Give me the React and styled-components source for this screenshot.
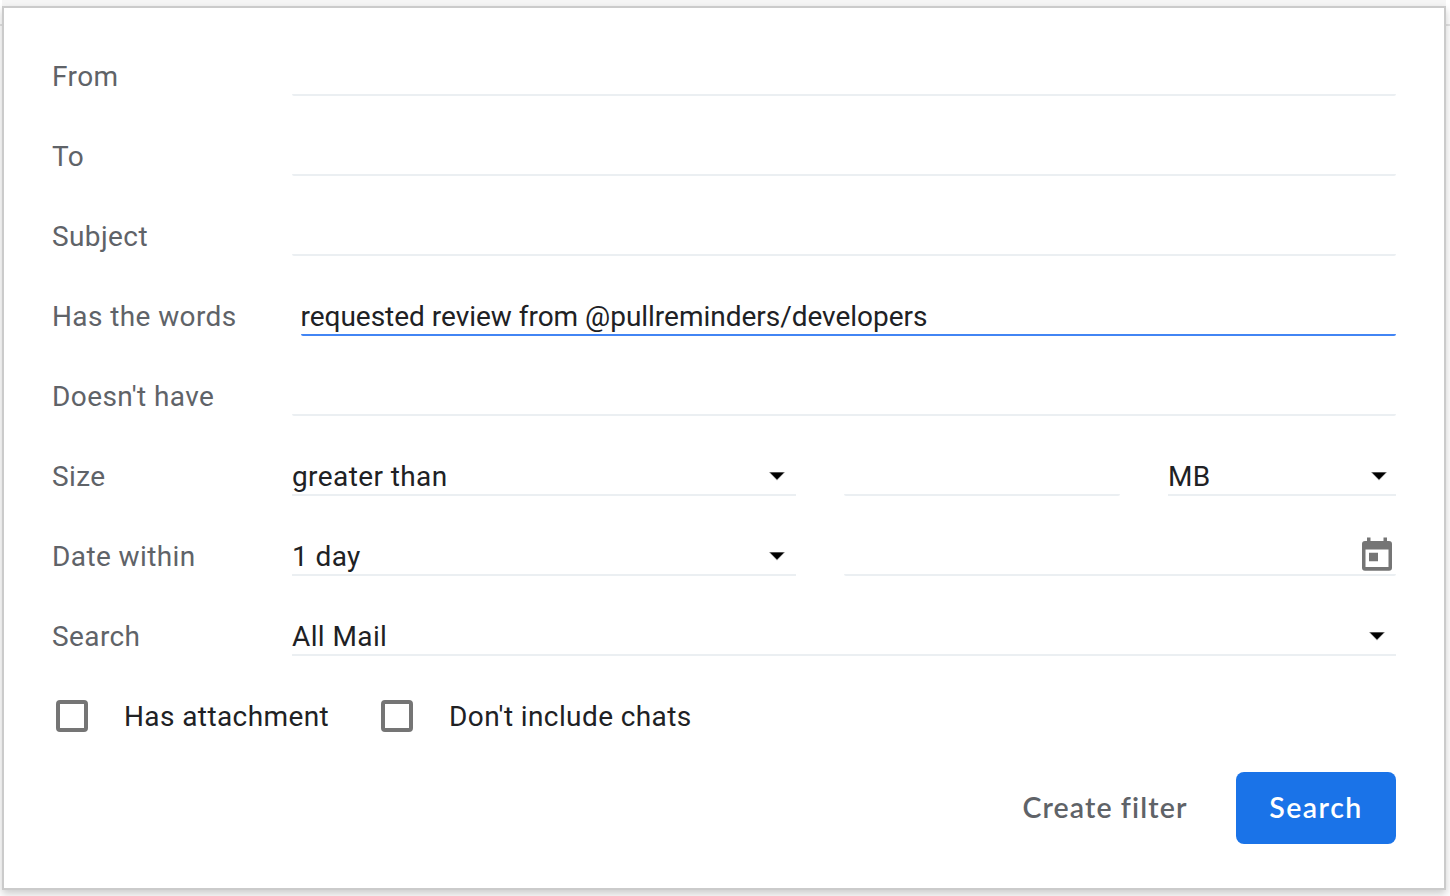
import React from "react";
import styled, { createGlobalStyle } from "styled-components";

const GlobalStyle = createGlobalStyle`
  *, *::before, *::after { box-sizing: border-box; }
  html, body { margin: 0; height: 100%; overflow: hidden; background: #fff; }
  #root { height: 100%; }
`;

const Page = styled.div`
  position: relative;
  height: 896px;
  padding: 6px 4px 0 2px;
  overflow: hidden;
  background: linear-gradient(#e4e4e4, #e4e4e4) 0 24px / 100% 2px no-repeat, #fff;
  font-family: Roboto, "Liberation Sans", sans-serif;
`;

const SearchBar = styled.div`
  position: absolute;
  top: 0;
  left: 2px;
  right: 4px;
  height: 8px;
  background: #f5f5f5;
`;

const Panel = styled.form`
  position: relative;
  height: 884px;
  padding: 8px 48px 0;
  background: #fff;
  border: 2px solid #cbcbcb;
  box-shadow: 0 4px 8px rgba(0, 0, 0, 0.2);
  display: flex;
  flex-direction: column;
`;

const Row = styled.div`
  display: flex;
  align-items: flex-end;
  flex: none;
  height: 80px;
`;

const Label = styled.label`
  width: 240px;
  height: 38px;
  flex: none;
  font-size: 28px;
  line-height: 38px;
  letter-spacing: 0.4px;
  white-space: nowrap;
  color: #5f6368;
`;

const Field = styled.div`
  display: flex;
  align-items: flex-start;
  justify-content: flex-end;
  flex: ${(p) => (p.$width ? "none" : "1")};
  width: ${(p) => (p.$width ? `${p.$width}px` : "auto")};
  height: 40px;
  border-bottom: 2px solid #ebeff2;
  border-radius: 2px;
`;

const FocusedField = styled(Field)`
  justify-content: flex-start;
  margin-left: 9px;
  border-bottom-color: #4285f4;
  font-size: 28px;
  line-height: 42px;
  letter-spacing: -0.02px;
  text-indent: -0.5px;
  white-space: nowrap;
  color: #202124;
`;

const Select = styled(Field)`
  align-items: flex-start;
  justify-content: space-between;
  padding-right: ${(p) => p.$inset ?? 10}px;
  border-radius: 0;
  font-size: 28px;
  line-height: 42px;
  letter-spacing: 0.4px;
  white-space: nowrap;
  color: #202124;
`;

const Gap = styled.div`
  width: 48px;
  flex: none;
`;

const ArrowIcon = styled.svg`
  width: 18px;
  height: 10px;
  margin-top: 15px;
  flex: none;
`;

const CalendarIcon = styled.svg`
  width: 32px;
  height: 36px;
  margin-right: 3px;
  flex: none;
`;

const Options = styled.div`
  display: flex;
  align-items: center;
  flex: none;
  height: 38px;
  margin-top: 41px;
  padding-left: 4px;
`;

const Checkbox = styled.span`
  width: 32px;
  height: 32px;
  flex: none;
  border: 4px solid #757575;
  border-radius: 4px;
`;

const OptionLabel = styled.span`
  width: ${(p) => p.$width}px;
  margin-left: 36px;
  padding-top: 2px;
  font-size: 28px;
  line-height: 38px;
  letter-spacing: 0.4px;
  white-space: nowrap;
  color: #202124;
`;

const Actions = styled.div`
  display: flex;
  justify-content: flex-end;
  align-items: center;
  flex: none;
  height: 72px;
  margin-top: 37px;
`;

const Button = styled.button`
  width: ${(p) => p.$width}px;
  height: 72px;
  padding: 0 0 3px;
  border: 0;
  border-radius: 8px;
  background: ${(p) => (p.$primary ? "#1a73e8" : "transparent")};
  color: ${(p) => (p.$primary ? "#fff" : "#5f6368")};
  font: 600 28.5px Lato, sans-serif;
  letter-spacing: ${(p) => p.$spacing}px;
  white-space: nowrap;
`;

const Arrow = () => (
  <ArrowIcon viewBox="0 0 18 10">
    <path d="M.8 1h16.400L9 9.600z" fill="#000" opacity=".35" />
    <path d="M2 1.500h14L9 8.600z" fill="#000" />
  </ArrowIcon>
);

const Calendar = () => (
  <CalendarIcon viewBox="0 0 32 36">
    <path
      fill="#757575"
      fillRule="evenodd"
      d="M6 1.500h3.500v3.500h13V1.500H26v3.500h2a3 3 0 0 1 3 3V31.800a3 3 0 0 1-3 3H4a3 3 0 0 1-3-3V8a3 3 0 0 1 3-3h2zM4.500 13.500v17.500h23V13.500zM8 16.700h9v8.600H8z"
    />
  </CalendarIcon>
);

export default function App() {
  return (
    <>
      <GlobalStyle />
      <Page>
        <SearchBar />
        <Panel>
          {["From", "To", "Subject"].map((name) => (
            <Row key={name}>
              <Label>{name}</Label>
              <Field />
            </Row>
          ))}
          <Row>
            <Label>Has the words</Label>
            <FocusedField>requested review from @pullreminders/developers</FocusedField>
          </Row>
          <Row>
            <Label>Doesn't have</Label>
            <Field />
          </Row>
          <Row>
            <Label>Size</Label>
            <Select $width={504}>greater than<Arrow /></Select>
            <Gap />
            <Field $width={276} />
            <Gap />
            <Select $inset={8}>MB<Arrow /></Select>
          </Row>
          <Row>
            <Label>Date within</Label>
            <Select $width={504}>1 day<Arrow /></Select>
            <Gap />
            <Field><Calendar /></Field>
          </Row>
          <Row>
            <Label>Search</Label>
            <Select>All Mail<Arrow /></Select>
          </Row>
          <Options>
            <Checkbox />
            <OptionLabel $width={257}>Has attachment</OptionLabel>
            <Checkbox />
            <OptionLabel $width={260}>Don't include chats</OptionLabel>
          </Options>
          <Actions>
            <Button type="button" $width={262} $spacing={1.1}>Create filter</Button>
            <Button type="button" $primary $width={160} $spacing={1.5}>Search</Button>
          </Actions>
        </Panel>
      </Page>
    </>
  );
}
